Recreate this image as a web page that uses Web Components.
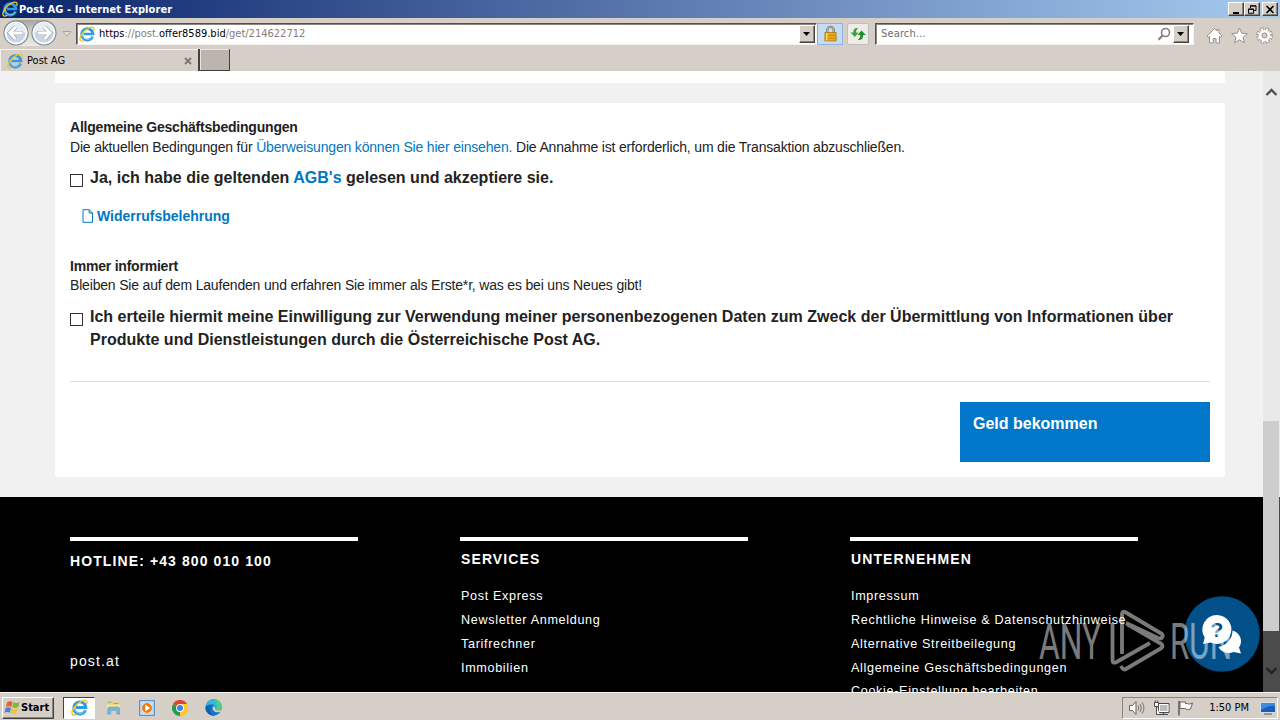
<!DOCTYPE html>
<html lang="de">
<head>
<meta charset="utf-8">
<title>Post AG</title>
<style>
html, body {
  margin: 0;
  height: 100%;
  overflow: hidden;
}

body {
  display: flex;
  flex-direction: column;
  width: 1280px;
  height: 720px;
  background: #d6cfc7;
  color: #222;
  font-family: "Liberation Sans", Arial, sans-serif;
  font-size: 14px;
}

a {
  color: #0077c1;
  text-decoration: none;
}
</style>
</head>
<body>
<title-bar>Post AG - Internet Explorer</title-bar>
<nav-bar></nav-bar>
<tab-bar>Post AG</tab-bar>

<page-view>
  <post-card cut></post-card>
  <post-card>
    <consent-group heading="Allgemeine Geschäftsbedingungen" style="--intro-height: 20px">
      <span slot="intro">Die aktuellen Bedingungen für <a>Überweisungen können Sie hier einsehen.</a> Die Annahme ist erforderlich, um die Transaktion abzuschließen.</span>
      <check-row><span>Ja, ich habe die geltenden <a>AGB's</a> gelesen und akzeptiere sie.</span></check-row>
    </consent-group>
    <doc-link>Widerrufsbelehrung</doc-link>
    <consent-group heading="Immer informiert" style="--row-gap: 10px">
      <span slot="intro">Bleiben Sie auf dem Laufenden und erfahren Sie immer als Erste*r, was es bei uns Neues gibt!</span>
      <check-row><span>Ich erteile hiermit meine Einwilligung zur Verwendung meiner personenbezogenen Daten zum Zweck der Übermittlung von Informationen über</span><br><span>Produkte und Dienstleistungen durch die Österreichische Post AG.</span></check-row>
    </consent-group>
    <submit-row>Geld bekommen</submit-row>
  </post-card>
  <page-footer slot="footer">
    <footer-column hotline heading="HOTLINE: +43 800 010 100"><span>post.at</span></footer-column>
    <footer-column heading="SERVICES">
      <span>Post Express</span>
      <span>Newsletter Anmeldung</span>
      <span>Tarifrechner</span>
      <span>Immobilien</span>
    </footer-column>
    <footer-column heading="UNTERNEHMEN">
      <span>Impressum</span>
      <span>Rechtliche Hinweise &amp; Datenschutzhinweise</span>
      <span>Alternative Streitbeilegung</span>
      <span>Allgemeine Geschäftsbedingungen</span>
      <span>Cookie-Einstellung bearbeiten</span>
    </footer-column>
  </page-footer>
  <chat-button slot="overlay"></chat-button>
  <run-mark slot="overlay"></run-mark>
  <scroll-bar slot="overlay"></scroll-bar>
</page-view>

<task-bar></task-bar>

<script>
// name: [width, height of the view box, drawing]
const ICONS = {
  ie: [16, 16, `
    <path d="M13.6 10.6A5.7 5.7 0 1 1 14 8H4.6" fill="none" stroke="#2f9be0" stroke-width="2.7"/>
    <path d="M13.1 10.9A5.3 5.3 0 0 1 3.2 8.6" fill="none" stroke="#8fd4f7" stroke-width=".8"/>
    <path d="M14.6 4.8C16 1.6 13.6 0 9.6 2.2 4.5 4.8.2 10.5 1 13.8c.4 1.7 2.3 1.5 4.2.6" fill="none" stroke="#f0c32e" stroke-width="1.4"/>`],
  back: [26, 26, `
    <circle cx="13" cy="13" r="12" fill="#e4eaef" stroke="#7f8890" stroke-width="1.2"/>
    <circle cx="13" cy="13" r="10.4" fill="#c9d5e0" stroke="#f8fbfd" stroke-width="1.8"/>
    <path d="M3.5 12a9.5 9.5 0 0 1 19 0c-6 2.5-13 2.5-19 0z" fill="#e6ecf1"/>
    <path d="M12.5 7 6.8 13l5.7 6M7.5 13H20" fill="none" stroke="#9aa7b5" stroke-width="4.2"/>
    <path d="M12.5 7 6.8 13l5.7 6M7.5 13H19.5" fill="none" stroke="#fff" stroke-width="2.8"/>`],
  lock: [16, 18, `
    <path d="M4.5 8V5.5a3.5 3.5 0 0 1 7 0V8" fill="none" stroke="#7b7466" stroke-width="2.4"/>
    <path d="M4.5 8V5.5a3.5 3.5 0 0 1 7 0V8" fill="none" stroke="#c9c3b3" stroke-width="1"/>
    <path d="M2 8h12v9H2z" fill="#e9ac1c" stroke="#a87408" stroke-width=".8"/>
    <path d="M2.5 11h11M2.5 14h11" stroke="#b57c0c" stroke-width=".8"/>
    <path d="M4 8.5v8" stroke="#fbdc6c" stroke-width="1.5"/>`],
  refresh: [16, 16, `
    <path d="M8 2C5 1.5 3.3 3 3.3 6.5H.5L4.8 11l3.7-4.5H6C6 5 6.5 3.5 8 2z" fill="#38a13c"/>
    <path d="M8 14c3.5.5 5.2-1.5 5.2-5H16L11.5 4.5 7.5 9h2.8c0 2-.8 3.5-2.3 5z" fill="#258a2b"/>`],
  search: [14, 14, `
    <circle cx="8.5" cy="5.5" r="4" fill="none" stroke="#85807c" stroke-width="1.6"/>
    <path d="M5.7 8.3 1.5 12.7" stroke="#85807c" stroke-width="2.2"/>`],
  home: [17, 17, `
    <path d="M8.5 1.5 1 9l1.3 1.2L3.5 9.2V16h3.7v-4.5h2.8V16h3.5V9.2l1.2 1L16 9l-3-3V2.5h-2v1.6z" fill="#fff" stroke="#98928c" stroke-width="1"/>`],
  star: [17, 17, `
    <path d="m8.5 1 2.2 5.2 5.6.4-4.3 3.7 1.4 5.5-4.9-3-4.9 3L5 10.3.7 6.6l5.6-.4z" fill="#fff" stroke="#98928c" stroke-width="1"/>`],
  gear: [17, 17, `
    <circle cx="8.5" cy="8.5" r="6.4" fill="none" stroke="#98928c" stroke-width="3.8" stroke-dasharray="3.4 1.626"/>
    <circle cx="8.5" cy="8.5" r="6.2" fill="none" stroke="#fff" stroke-width="2.6" stroke-dasharray="1.9 2.97" stroke-dashoffset="-.7"/>
    <circle cx="8.5" cy="8.5" r="4.2" fill="none" stroke="#fff" stroke-width="2.8"/>
    <circle cx="8.5" cy="8.5" r="2.5" fill="#d6cfc7" stroke="#98928c" stroke-width="1"/>`],
  page: [12, 14, `
    <path d="M1 .7h6.3L10.5 4v9.3H1zM7.2.7V4h3.3" fill="none" stroke="#0077c1" stroke-width="1"/>`],
  windows: [18, 16, `
    <path d="M3.5 2.2C5.5.8 7.2 1 9 2L7.7 7.4C6 6.5 4.2 6.4 2 7.4z" fill="#e8602c"/>
    <path d="M9.9 2.4C12 3.5 14 3.2 16.5 2L15 7.6c-2.3 1-4.3 1-6.4.1z" fill="#7fb93a"/>
    <path d="M1.8 8.4C4 7.4 5.7 7.5 7.5 8.4L6.2 13.5C4.5 12.5 2.7 12.5.5 13.5z" fill="#4686d4"/>
    <path d="M8.4 8.7c2.1 1 4.1.9 6.4 0l-1.5 5.2c-2.3 1.1-4.2 1-6.3-.1z" fill="#f6c22e"/>`],
  folder: [18, 17, `
    <path d="M2 2h5l1 1.5h7V12H2z" fill="#ecd27b"/>
    <path d="M3 3.5h3.5M9 4.8h5" stroke="#7cb46a" stroke-width="1.2"/>
    <path d="M2 6h14v6H2z" fill="#f6e6a2"/>
    <path d="M3 16v-5.5Q3 8.5 5 8.5h8.5q2 0 2 2V16h-3v-4H6v4z" fill="#78b9dd" stroke="#4f93bd" stroke-width=".6"/>`],
  player: [16, 16, `
    <path d="M.7.7h14.6v14.6H.7z" fill="#d9e8f5" stroke="#5c93c9" stroke-width="1.3"/>
    <path d="M3 3h10v10H3z" fill="#f9fbfd" stroke="#8fb8de" stroke-width=".6"/>
    <circle cx="8" cy="8" r="5" fill="#ef7c13"/>
    <path d="M6.3 4.8 11.3 8l-5 3.2z" fill="#fff"/>`],
  chrome: [16, 16, `
    <path d="M8 8 1.07 4A8 8 0 0 1 14.93 4z" fill="#df4132"/>
    <path d="M8 8 14.93 4A8 8 0 0 1 8 16z" fill="#fcc928"/>
    <path d="M8 8v8A8 8 0 0 1 1.07 4z" fill="#279b4e"/>
    <path d="M8 4h6.93A8 8 0 0 1 8 16l3.5-6z" fill="#fcc928"/>
    <circle cx="8" cy="8" r="3.9" fill="#fff"/>
    <circle cx="8" cy="8" r="3" fill="#3f7de8"/>`],
  edge: [16, 16, `
    <circle cx="8" cy="8" r="7.7" fill="#1478c8"/>
    <path d="M.4 7.5C1 2.5 4.5.3 8 .3c5 0 8 3.7 7.7 7 0 2.5-2 3.5-3.7 3.5-2.5 0-3-1-2.3-2C10.5 7 8.5 5 6 5 3 5 1 6.5.4 7.5z" fill="#35b8d8"/>
    <path d="M8 .3c5 0 8 3.7 7.7 7 0 2.5-2 3.5-3.7 3.5-1.5 0-2.5-.5-2.5-1.2C13 8 11 2.5 8 .3z" fill="#52cd86"/>
    <path d="M7.5 7C6.5 9 8 12 11 12.5 13 12.7 14.5 12 15 11.5 15.5 9.5 14.5 10.8 12 10.8c-2.5 0-3-1-2.3-2C10 8 8.5 6.5 7.5 7z" fill="#d6cfc7"/>
    <path d="M6.5 6.5C3.5 8 4 14 9 15.6 4.5 16 .8 13 .4 8.5 1.5 6 4.5 5 6.5 6.5z" fill="#0d5fb0"/>`],
  sound: [18, 16, `
    <path d="M1.5 5.5h3L8 1.5v13L4.5 10.5h-3z" fill="#f7f6f4" stroke="#6b6762" stroke-width="1"/>
    <path d="M10 5.5q1.5 2.5 0 5M12 3.8q2.7 4.2 0 8.4M14.2 2.5q3.5 5.5 0 11" fill="none" stroke="#77726d" stroke-width="1"/>`],
  network: [17, 16, `
    <path d="M5.5 3.5H16v9H5.5z" fill="#b9bcbc" stroke="#4d4a47" stroke-width="1"/>
    <path d="M6.5 4.5H15v7H6.5z" fill="none" stroke="#fff" stroke-width="1"/>
    <path d="M10.5 12v2M6.5 14.5H15" stroke="#4d4a47" stroke-width="1.2"/>
    <path d="M1.5 2.5h4v4h-4zM2.3.5v2M4.7.5v2M3.5 6.5v8H7" fill="#fff" stroke="#4d4a47" stroke-width="1"/>`],
  flag: [17, 16, `
    <path d="M2 1v14.5" stroke="#5b5753" stroke-width="1.5"/>
    <path d="M3 2h5.5v1.5h2c1.5 1 3 .5 5-.5l-2 6c-2 1-4 1-5.5-.5H3z" fill="#f9f8f6" stroke="#6b6762" stroke-width="1"/>`],
  desktop: [16, 14, `
    <path d="M.5 1.5h15v10H.5z" fill="#1c5cb8" stroke="#e8eef5" stroke-width=".8"/>
    <path d="M1 2h14v3Q8 4 1 9z" fill="#3d8ae0"/>
    <path d="M4 13h8" stroke="#777" stroke-width="1.4"/>`],
  minimize: [10, 9, '<path d="M2 7h6v2H2z"/>'],
  restore: [10, 9, '<path d="M3.5 3V.8H9v4.7H7M3 1h6" fill="none" stroke="#000"/><path d="M1.5 4h5v4.3h-5zM1 4.3h6" fill="none" stroke="#000"/>'],
  close: [10, 9, '<path d="m1.5 1 7 7m0-7-7 7" fill="none" stroke="#000" stroke-width="1.7"/>'],
  down: [8, 4, '<path d="M0 0h7L3.5 4z"/>'],
};

const UI_FONT = '"DejaVu Sans Condensed", "DejaVu Sans", Tahoma, sans-serif';

function define(name, html) {
  const template = document.createElement('template');
  template.innerHTML = html;

  window.customElements.define(name, class extends HTMLElement {
    constructor() {
      super();
      this.attachShadow({ mode: 'open' }).appendChild(template.content.cloneNode(true));
    }

    connectedCallback() {
      const heading = this.shadowRoot.querySelector('.heading');
      if (heading && this.hasAttribute('heading')) heading.textContent = this.getAttribute('heading');
    }
  });
}

// <ui-icon name="ie" size="16">: size is the drawn width
class UiIconElement extends HTMLElement {
  connectedCallback() {
    if (this.shadowRoot) return;
    const [width, height, body] = ICONS[this.getAttribute('name')];
    const size = Number(this.getAttribute('size') || width);
    this.attachShadow({ mode: 'open' }).innerHTML = `
      <style>
      :host { display: block; flex: none; line-height: 0; }
      svg { display: block; }
      </style>
      <svg width="${size}" height="${size * height / width}" viewBox="0 0 ${width} ${height}">${body}</svg>`;
  }
}
window.customElements.define('ui-icon', UiIconElement);

// Classic raised button
define('win-button', /* html */ `
<style>
:host {
  display: flex;
  align-items: center;
  justify-content: center;
  flex: none;
  box-sizing: border-box;
  background: #d6cfc7;
  border: 1px solid;
  border-color: #fff #45413d #45413d #fff;
  box-shadow: inset -1px -1px #8a857e;
}
</style>
<slot></slot>`);

define('title-bar', /* html */ `
<style>
:host {
  display: flex;
  align-items: center;
  flex: none;
  height: 18px;
  box-sizing: border-box;
  padding: 0 2px;
  background: linear-gradient(90deg, #0a246a, #a6caf0);
  color: #fff;
  font: bold 11px ${UI_FONT};
}
.text {
  flex: 1;
  padding-left: 1px;
  white-space: pre;
  letter-spacing: .09px;
}
win-button {
  width: 16px;
  height: 14px;
}
.close { margin-left: 2px; }
</style>
<ui-icon name="ie" size="16"></ui-icon>
<span class="text"><slot></slot></span>
<win-button><ui-icon name="minimize"></ui-icon></win-button>
<win-button><ui-icon name="restore"></ui-icon></win-button>
<win-button class="close"><ui-icon name="close"></ui-icon></win-button>`);

define('nav-bar', /* html */ `
<style>
:host {
  display: flex;
  align-items: center;
  flex: none;
  height: 31px;
  box-sizing: border-box;
  padding: 0 7px 0 3px;
  font: 11px ${UI_FONT};
}
.buttons {
  display: flex;
  gap: 2px;
  height: 26px;
  margin-top: -1px;
  border-radius: 13px;
  background: linear-gradient(#a5a19d, #d6cfc7 40%, #eceae7);
}
.forward { transform: scaleX(-1); }
.history {
  width: 19px;
  display: flex;
  justify-content: center;
}
.field {
  display: flex;
  align-items: center;
  height: 22px;
  box-sizing: border-box;
  background: #fff;
  border: 1px solid;
  border-color: #55504b #f4f2ef #f4f2ef #55504b;
  box-shadow: inset 1px 1px #8a857e;
}
.address { width: 741px; padding-left: 2px; }
.search { width: 319px; margin-left: 6px; padding-left: 5px; color: #6d6d6d; }
.field span { flex: 1; padding-left: 4px; white-space: pre; }
.search span { padding-left: 0; letter-spacing: .15px; }
.url { color: #808080; }
.url b { color: #000; font-weight: normal; }
win-button { width: 16px; height: 18px; margin-right: 1px; }
.search win-button { margin: 0 4px 0 2px; }
.tool {
  display: flex;
  align-items: center;
  justify-content: center;
  width: 22px;
  height: 22px;
  box-sizing: border-box;
  background: #eeebe8;
  border: 1px solid #c2bdb7;
  border-radius: 2px;
}
.lock { width: 26px; margin: 0 4px 0 0; background: #c6dcf5; border-color: #8eb4e2; border-radius: 0; }
.links {
  flex: 1;
  display: flex;
  justify-content: flex-end;
  gap: 8px;
  padding-top: 3px;
}
</style>
<div class="buttons">
  <ui-icon name="back" size="26"></ui-icon>
  <ui-icon class="forward" name="back" size="26"></ui-icon>
</div>
<div class="history"><svg width="10" height="6"><path d="M1 .5h8L5 5z" fill="#e3dfda" stroke="#aaa49d"/></svg></div>
<div class="field address">
  <ui-icon name="ie" size="16"></ui-icon>
  <span class="url"><b>https</b>://post.<b>offer8589.bid</b>/get/214622712</span>
  <win-button><ui-icon name="down"></ui-icon></win-button>
</div>
<div class="tool lock"><ui-icon name="lock" size="15"></ui-icon></div>
<div class="tool"><ui-icon name="refresh" size="16"></ui-icon></div>
<div class="field search">
  <span>Search...</span>
  <ui-icon name="search" size="14"></ui-icon>
  <win-button><ui-icon name="down"></ui-icon></win-button>
</div>
<div class="links">
  <ui-icon name="home"></ui-icon>
  <ui-icon name="star"></ui-icon>
  <ui-icon name="gear"></ui-icon>
</div>`);

define('tab-bar', /* html */ `
<style>
:host {
  display: flex;
  flex: none;
  height: 22px;
  color: #000;
  font: 11px ${UI_FONT};
}
.tab {
  display: flex;
  align-items: center;
  width: 198px;
  box-sizing: border-box;
  padding: 0 6px;
  border-top: 1px solid #f4f1ee;
  border-left: 1px solid #f4f1ee;
}
.tab span { flex: 1; padding-left: 4px; }
.new {
  width: 32px;
  height: 22px;
  box-sizing: border-box;
  background: #bcb4ae;
  border: 1px solid #45413d;
  border-width: 0 1px 1px 2px;
  box-shadow: inset 1px 1px #e9e5e1;
}
</style>
<div class="tab">
  <ui-icon name="ie" size="16"></ui-icon>
  <span><slot></slot></span>
  <svg width="8" height="8"><path d="m1 1 6 6m0-6L1 7" stroke="#7c7671" stroke-width="1.8"/></svg>
</div>
<div class="new"></div>`);

define('page-view', /* html */ `
<style>
:host {
  display: flex;
  flex-direction: column;
  position: relative;
  flex: none;
  height: 621px;
  overflow: hidden;
  background: #f1f1f1;
}
.cards {
  display: flex;
  flex-direction: column;
  gap: 20px;
  padding: 0 55px 20px;
}
</style>
<div class="cards"><slot></slot></div>
<slot name="footer"></slot>
<slot name="overlay"></slot>`);

define('post-card', /* html */ `
<style>
:host {
  display: block;
  height: 374px;
  box-sizing: border-box;
  padding: 14px 15px 15px;
  background: #fff;
  border-radius: 2px;
}
:host([cut]) {
  height: 12px;
  padding: 0;
  border-radius: 0 0 2px 2px;
}
</style>
<slot></slot>`);

define('consent-group', /* html */ `
<style>
:host { display: block; }
.heading {
  font-weight: bold;
  line-height: 20px;
  letter-spacing: -.21px;
}
.intro {
  height: var(--intro-height, 19px);
  line-height: var(--intro-height, 19px);
  letter-spacing: -.178px;
  white-space: nowrap;
}
</style>
<div class="heading"></div>
<div class="intro"><slot name="intro"></slot></div>
<slot></slot>`);

define('check-row', /* html */ `
<style>
:host {
  display: flex;
  align-items: flex-start;
  gap: 7px;
  margin-top: var(--row-gap, 9px);
  font-size: 16px;
  font-weight: bold;
  letter-spacing: .008px;
  line-height: 23px;
  white-space: nowrap;
}
.box {
  flex: none;
  width: 13px;
  height: 13px;
  box-sizing: border-box;
  margin-top: 8px;
  border: 1px solid #333;
  background: #fff;
}
</style>
<div class="box"></div>
<div><slot></slot></div>`);

define('doc-link', /* html */ `
<style>
:host {
  display: flex;
  align-items: center;
  gap: 3px;
  height: 20px;
  padding: 17px 12px 30px;
  color: #0077c1;
  font-weight: bold;
}
</style>
<ui-icon name="page" size="12"></ui-icon>
<span><slot></slot></span>`);

define('submit-row', /* html */ `
<style>
:host {
  display: flex;
  justify-content: flex-end;
  margin-top: 30px;
  padding-top: 20px;
  border-top: 1px solid #dcdcdc;
}
button {
  width: 250px;
  height: 60px;
  padding: 0 13px 17px;
  border: 0;
  background: #0077c8;
  color: #fff;
  font: bold 16px "Liberation Sans", Arial, sans-serif;
  text-align: left;
}
</style>
<button><slot></slot></button>`);

define('page-footer', /* html */ `
<style>
:host {
  display: flex;
  align-items: flex-start;
  gap: 102px;
  height: 195px;
  box-sizing: border-box;
  padding: 40px 70px 0;
  overflow: hidden;
  background: #000;
  color: #fff;
}
</style>
<slot></slot>`);

define('footer-column', /* html */ `
<style>
:host {
  flex: none;
  display: block;
  width: 288px;
  border-top: 4px solid #fff;
  font-size: 12.6px;
  line-height: 24px;
  letter-spacing: .67px;
  white-space: nowrap;
}
.heading {
  height: 37px;
  padding: 6px 0 0 1px;
  font-size: 14px;
  font-weight: bold;
  letter-spacing: 1.1px;
}
.list {
  display: flex;
  flex-direction: column;
  padding-left: 1px;
}
::slotted(:nth-child(5)) { margin-top: -1px; }
:host([hotline]) .heading {
  height: 100px;
  padding: 8px 0 0;
}
:host([hotline]) .list {
  padding: 0;
  font-size: 14px;
  letter-spacing: 1.15px;
}
</style>
<div class="heading"></div>
<div class="list"><slot></slot></div>`);

define('chat-button', /* html */ `
<style>
:host {
  position: absolute;
  left: 1184px;
  top: 525px;
}
svg { display: block; }
text { font: bold 21px "Liberation Sans", Arial, sans-serif; }
</style>
<svg width="76" height="76" viewBox="0 0 76 76">
  <circle cx="38" cy="38" r="37.8" fill="#02508a"/>
  <path d="M48.5 34.5c5 1.5 8.5 5.5 8.5 10.5 0 3-1 5-2 6.5l2 6-7-1.5c-7 2.5-13 0-15.5-5 8-1.5 14-8 14-16.5z" fill="#fff"/>
  <path d="M33 19a14.5 14.5 0 1 1-6.5 27.5L19 48l1.8-6.5A14.5 14.5 0 0 1 33 19z" fill="#fff"/>
  <text x="33" y="41" text-anchor="middle" fill="#02508a">?</text>
</svg>`);

define('run-mark', /* html */ `
<style>
:host {
  position: absolute;
  left: 1038px;
  top: 535px;
  opacity: .48;
}
svg { display: block; }
text { font: 50px Roboto, sans-serif; }
</style>
<svg width="200" height="70" viewBox="0 0 200 70" fill="#fff">
  <text x="1" y="53" textLength="62" lengthAdjust="spacingAndGlyphs">ANY</text>
  <text x="132" y="53" textLength="62" lengthAdjust="spacingAndGlyphs">RUN</text>
  <g fill="none" stroke="#fff" stroke-width="3.8" stroke-linejoin="round">
    <path d="M84 48V8q0-3 3-2l37 22q2 2-1 4.5l-3-.5-32-15"/>
    <path d="M74.5 17v37q0 4 4 2L112 37"/>
    <path d="M89 18l34.500 20q2 2 0 4L87 63.500q-2 .5-4-3.500"/>
  </g>
</svg>`);

define('scroll-bar', /* html */ `
<style>
:host {
  display: flex;
  flex-direction: column;
  align-items: center;
  justify-content: space-between;
  position: absolute;
  top: 0;
  right: 0;
  width: 17px;
  height: 621px;
  box-sizing: border-box;
  padding: 17px 0;
  background: linear-gradient(#e9e9e9 426px, #4b4b4b 426px);
}
.thumb {
  position: absolute;
  left: 0;
  top: 350px;
  width: 16px;
  height: 210px;
  background: #cdcdcd;
}
</style>
<svg width="13" height="9"><path d="m1.5 7 5-5 5 5" fill="none" stroke="#505050" stroke-width="2.4"/></svg>
<div class="thumb"></div>
<svg width="13" height="9"><path d="m1.5 2 5 5 5-5" fill="none" stroke="#222" stroke-width="2.4"/></svg>`);

define('task-bar', /* html */ `
<style>
:host {
  display: flex;
  align-items: center;
  flex: none;
  height: 28px;
  box-sizing: border-box;
  padding: 2px 2px 0;
  border-top: 1px solid #f6f4f1;
  background: #d6cfc7;
  color: #000;
  font: 11px ${UI_FONT};
}
.start {
  justify-content: flex-start;
  width: 52px;
  height: 22px;
  padding-left: 1px;
  font-weight: bold;
}
.apps {
  flex: 1;
  display: flex;
  align-items: center;
  gap: 17px;
  padding-left: 9px;
}
.active {
  display: flex;
  align-items: center;
  justify-content: center;
  width: 32px;
  height: 22px;
  box-sizing: border-box;
  margin-right: -7px;
  background: #fff;
  border: 1px solid;
  border-color: #45413d #fff #fff #45413d;
}
.tray {
  display: flex;
  align-items: center;
  gap: 7px;
  width: 156px;
  height: 22px;
  box-sizing: border-box;
  padding: 0 1px 0 5px;
  border: 1px solid;
  border-color: #8a857e #fff #fff #8a857e;
}
.clock { flex: 1; text-align: right; white-space: nowrap; padding-right: 4px; }
</style>
<win-button class="start"><ui-icon name="windows" size="17"></ui-icon>Start</win-button>
<div class="apps">
  <div class="active"><ui-icon name="ie" size="17"></ui-icon></div>
  <ui-icon name="folder" size="17"></ui-icon>
  <ui-icon name="player" size="16"></ui-icon>
  <ui-icon name="chrome" size="16"></ui-icon>
  <ui-icon name="edge" size="17"></ui-icon>
</div>
<div class="tray">
  <ui-icon name="sound"></ui-icon>
  <ui-icon name="network"></ui-icon>
  <ui-icon name="flag"></ui-icon>
  <span class="clock">1:50 PM</span>
  <ui-icon name="desktop" size="16"></ui-icon>
</div>`);
</script>
</body>
</html>
